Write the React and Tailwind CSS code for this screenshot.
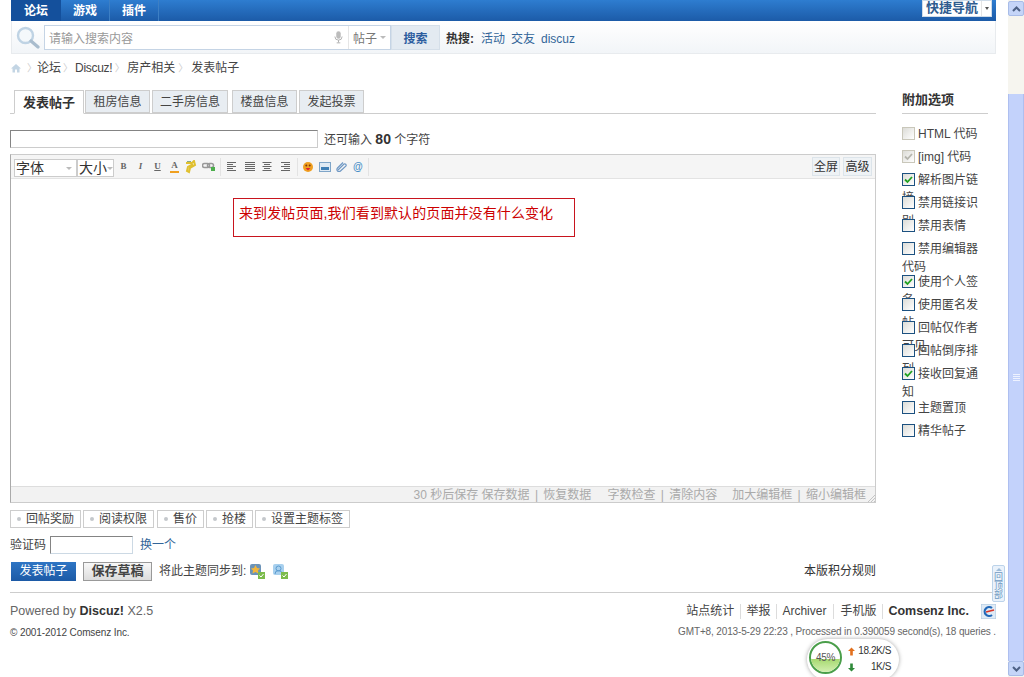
import React from "react";

const F = { fontFamily: '"Liberation Sans","Noto Sans CJK SC",sans-serif' };

function Check({ on, dis }) {
  return (
    <span className={`relative z-10 inline-block w-[13px] h-[13px] mr-[3px] align-[-2px] border bg-gradient-to-br from-[#dcdcd7] to-white ${dis ? "border-[#c9c7ba]" : "border-[#1c5180]"}`}>
      {on && (
        <svg viewBox="0 0 11 11" className="absolute inset-0 w-[11px] h-[11px]">
          <path d="M2 5.5 L4.5 8 L9 3" fill="none" stroke={dis ? "#b5b5ad" : "#21a121"} strokeWidth="1.8" />
        </svg>
      )}
    </span>
  );
}

function Opt({ label, on, dis, h = "h-[23px]" }) {
  return (
    <div className={`${h} w-[86px] leading-[18px] text-[12px] text-[#444]`}>
      <Check on={on} dis={dis} />
      {label}
    </div>
  );
}

function Tab({ children, active, w, ml }) {
  return active ? (
    <div className={`${w} ${ml} h-[24px] -mb-px bg-white border border-[#cdcdcd] border-b-white text-center font-bold text-[13px] text-[#333] leading-[23px]`}>{children}</div>
  ) : (
    <div className={`${w} ${ml} h-[23px] bg-[#e8edf2] border border-[#cdcdcd] text-center text-[#444] leading-[22px]`}>{children}</div>
  );
}

function Sep() {
  return <span className="w-px h-[15px] bg-[#dcdcdc] mx-[5.5px]" />;
}

function Tag({ children, w, ml }) {
  return (
    <div className={`${w} ${ml} h-[18px] border border-[#cdcdcd] flex items-center text-[12px] text-[#444] leading-none pl-[5px]`}>
      <span className="w-[4px] h-[4px] rounded-full bg-[#c4c8cc] mr-[5px] ml-[1px] shrink-0" />
      {children}
    </div>
  );
}

function Lines({ kind }) {
  const rows = [0, 1, 2, 3, 4];
  const base = [9, 6, 9, 6, 9];
  return (
    <svg viewBox="0 0 10 9" className="w-[10px] h-[9px] mr-[7.5px]">
      {rows.map((r) => {
        const w = kind === "j" ? 10 : base[r];
        const x = kind === "r" ? 10 - w : kind === "c" ? (10 - w) / 2 : 0;
        return <rect key={r} x={x} y={r * 2} width={w} height="1" fill="#666" />;
      })}
    </svg>
  );
}

function Pipe() {
  return <span className="mx-[2px]">|</span>;
}

export default function App() {
  return (
    <div style={F} className="relative w-[1024px] h-[677px] overflow-hidden bg-white flex text-[12px] text-[#444]">
      <div className="w-[1008px] shrink-0 flex flex-col">
        {/* nav */}
        <div className="ml-[11px] w-[985px] h-[21px] bg-gradient-to-b from-[#2e7dd0] to-[#1c5ba8] flex items-stretch text-white font-bold text-[12px]">
          <div className="w-[50px] bg-[#14509c] flex items-center justify-center">论坛</div>
          <div className="w-[49px] flex items-center justify-center border-r border-[#3d7fc4]">游戏</div>
          <div className="w-[49px] flex items-center justify-center border-r border-[#3d7fc4]">插件</div>
          <div className="flex-1" />
          <div className="mr-[4px] w-[70px] h-[17px] bg-white border border-[#cfdce9] text-[#2f5c8f] text-[13px] leading-none flex items-center pl-[3px]">
            <span className="pb-[2px]">快捷导航</span>
            <span className="ml-[3px] pl-[3px] border-l border-[#e4e4e4] h-full flex items-center">
              <span className="w-0 h-0 border-x-[2px] border-x-transparent border-t-[3px] border-t-[#555]" />
            </span>
          </div>
        </div>
        {/* search */}
        <div className="ml-[11px] w-[985px] h-[33px] bg-gradient-to-b from-white to-[#f2f5f8] border-b border-x border-[#e8ebee] flex items-center">
          <svg viewBox="0 0 24 24" className="w-[24px] h-[24px] ml-[4px] mr-[4px] mt-[1px]">
            <circle cx="9.5" cy="9.5" r="7.5" fill="#f4f8fb" stroke="#bfd3e4" strokeWidth="2.4" />
            <path d="M15 15 L22 21" stroke="#a9bccd" strokeWidth="3.2" strokeLinecap="round" />
          </svg>
          <div className="w-[347px] h-[25px] bg-white border border-[#c5d4e5] flex items-center pl-[4px] text-[#999]">
            <span className="flex-1 pt-[4px]">请输入搜索内容</span>
            <svg viewBox="0 0 10 14" className="w-[9px] h-[14px] mr-[5px]">
              <rect x="2.5" y="0.5" width="5" height="8.5" rx="2.5" fill="#bcbcbc" />
              <path d="M1 6.5 a4 4 0 0 0 8 0 M5 10.5 V13 M3 13.5 H7" fill="none" stroke="#aaa" strokeWidth="1" />
            </svg>
            <span className="h-full border-l border-[#e6e6e6] pl-[4px] pr-[4px] flex items-center text-[#777]">
              <span className="pt-[3px]">帖子</span>
              <span className="ml-[3px] w-0 h-0 border-x-[3px] border-x-transparent border-t-[3px] border-t-[#bbb]" />
            </span>
          </div>
          <div className="w-[49px] h-[25px] pt-[3px] bg-[#e3eaf1] border border-[#d5dfe9] flex items-center justify-center font-bold text-[#2b5c9e]">搜索</div>
          <div className="flex items-center pt-[3px]">
            <span className="ml-[6px] font-bold text-[#333]">热搜:</span>
            <span className="ml-[7px] text-[#369]">活动</span>
            <span className="ml-[6px] text-[#369]">交友</span>
            <span className="ml-[6px] text-[#369]">discuz</span>
          </div>
        </div>
        {/* breadcrumb */}
        <div className="ml-[11px] h-[18px] mt-[5px] flex items-center text-[#444]">
          <svg viewBox="0 0 10 10" className="w-[10px] h-[10px] mr-[6px]">
            <path d="M5 1 L10 5.5 H8.5 V9.5 H6 V6.5 H4 V9.5 H1.5 V5.5 H0 Z" fill="#c3d5e4" />
          </svg>
          <span className="text-[#ccc] w-[10px] text-[10px]">〉</span>
          <span>论坛</span>
          <span className="text-[#ccc] w-[14px] text-center text-[10px]">〉</span>
          <span className="tracking-[-0.3px]">Discuz!</span>
          <span className="text-[#ccc] w-[15px] text-center text-[10px]">〉</span>
          <span>房产相关</span>
          <span className="text-[#ccc] w-[16px] text-center text-[10px]">〉</span>
          <span>发表帖子</span>
        </div>

        {/* body */}
        <div className="flex mt-[13px]">
          <div className="ml-[10px] w-[866px] flex flex-col">
            <div className="h-[24px] border-b border-[#cdcdcd] flex pl-[4px] items-start">
              <Tab active w="w-[70px]">发表帖子</Tab>
              <Tab w="w-[65px]" ml="ml-px">租房信息</Tab>
              <Tab w="w-[76px]" ml="ml-[2px]">二手房信息</Tab>
              <Tab w="w-[65px]" ml="ml-[4px]">楼盘信息</Tab>
              <Tab w="w-[65px]" ml="ml-[2px]">发起投票</Tab>
            </div>
            {/* title */}
            <div className="mt-[16px] flex items-center h-[18px]">
              <div className="w-[308px] h-[18px] bg-white border border-[#ccc] border-t-[#848484] border-l-[#848484]" />
              <span className="ml-[6px] text-[#444]">还可输入 <b className="text-[14px] text-[#333]">80</b> 个字符</span>
            </div>
            {/* editor */}
            <div className="relative mt-[6px] h-[349px] border border-[#ccc] border-l-[#aaa] flex flex-col">
              <div className="h-[24px] bg-[#f5f5f5] border-b border-[#e3e3e3] flex items-center pl-[3px] pr-[3px]">
                <div className="w-[63px] h-[18px] mt-[3px] border border-[#ccc] bg-white flex items-center text-[14px] text-[#333] pl-[1px]">
                  <span className="flex-1">字体</span>
                  <span className="mr-[4px] w-0 h-0 border-x-[3px] border-x-transparent border-t-[3px] border-t-[#bbb]" />
                </div>
                <div className="w-[37px] h-[18px] mt-[3px] border border-[#ccc] bg-white flex items-center text-[14px] text-[#333] pl-[1px]">
                  <span className="flex-1 whitespace-nowrap">大小</span>
                  <span className="w-0 h-0 border-x-[3px] border-x-transparent border-t-[3px] border-t-[#bbb]" />
                </div>
                <div className="flex items-center ml-[1px] text-[9px] text-[#666]" style={{ fontFamily: '"Liberation Serif",serif' }}>
                  <b className="w-[17px] text-center">B</b>
                  <i className="w-[17px] text-center font-bold">I</i>
                  <u className="w-[17px] text-center font-bold">U</u>
                  <span className="w-[17px] flex flex-col items-center leading-none font-bold">
                    A<span className="w-[9px] h-[2px] mt-px bg-[#f0a020]" />
                  </span>
                  <svg viewBox="0 0 14 14" className="w-[14px] h-[14px] ml-[1px]">
                    <path d="M2 3 H8 L10 1 L11 5 L6 8 L5 12 L3 11 L4 7 L9 4" fill="none" stroke="#e0c030" strokeWidth="2" />
                    <path d="M3 1.5 H7" stroke="#8a8" strokeWidth="1" />
                  </svg>
                  <svg viewBox="0 0 14 10" className="w-[14px] h-[10px] ml-[4px]">
                    <rect x="0.5" y="1.5" width="7" height="4" rx="2" fill="none" stroke="#999" strokeWidth="1.5" />
                    <rect x="5.5" y="1.5" width="6" height="4" rx="2" fill="none" stroke="#999" strokeWidth="1.5" />
                    <rect x="9" y="5" width="4" height="4" fill="#4cae4c" />
                  </svg>
                </div>
                <span className="w-px h-[18px] bg-[#e3e3e3] ml-[4px] mr-[6px]" />
                <div className="flex items-center">
                  <Lines kind="l" />
                  <Lines kind="j" />
                  <Lines kind="c" />
                  <Lines kind="r" />
                </div>
                <span className="w-px h-[18px] bg-[#e3e3e3] mr-[5px]" />
                <svg viewBox="0 0 10 10" className="w-[10px] h-[10px] mr-[6px]">
                  <circle cx="5" cy="5" r="5" fill="#f0a020" />
                  <circle cx="3.3" cy="3.6" r="1" fill="#7a3a10" />
                  <circle cx="6.7" cy="3.6" r="1" fill="#7a3a10" />
                  <path d="M2.5 6 H7.5 L5 8.5 Z" fill="#d23" />
                </svg>
                <svg viewBox="0 0 12 10" className="w-[12px] h-[10px] mr-[5px]">
                  <rect x="0.5" y="0.5" width="11" height="9" fill="#dfeaf4" stroke="#7fa5c8" />
                  <rect x="2" y="5" width="8" height="3" fill="#3f7fb5" />
                </svg>
                <svg viewBox="0 0 11 11" className="w-[11px] h-[11px] mr-[6px]">
                  <path d="M2 9 L8 3 a1.5 1.5 0 0 1 2 2 L4.5 10 a1 1 0 0 1 -3 -3 L7 1.5" fill="none" stroke="#6f98c4" strokeWidth="1.2" />
                </svg>
                <span className="w-[10px] text-[10px] font-bold text-[#4a90c8] leading-none">@</span>
                <span className="w-px h-[18px] bg-[#e3e3e3] ml-[5px]" />
                <div className="flex-1" />
                <div className="w-[28px] h-[19px] bg-[#eef2f5] border border-[#dce4ea] text-[#333] text-center leading-[18px]">全屏</div>
                <div className="w-[29px] h-[19px] ml-[3px] bg-[#eef2f5] border border-[#dce4ea] text-[#333] text-center leading-[18px]">高级</div>
              </div>
              <div className="flex-1 bg-white" />
              <div className="relative h-[16px] bg-[#f2f2f2] border-t border-[#ddd] flex items-center justify-end pt-px pr-[9px] text-[#aaa] whitespace-pre">
                <span>30 秒后保存 保存数据 <Pipe /> 恢复数据</span>
                <span className="ml-[16px]">字数检查 <Pipe /> 清除内容</span>
                <span className="ml-[15px]">加大编辑框 <Pipe /> 缩小编辑框</span>
                <svg viewBox="0 0 8 8" className="absolute right-0 bottom-0 w-[8px] h-[8px]">
                  <path d="M8 1 L1 8 M8 4 L4 8 M8 7 L7 8" stroke="#c4c4c4" />
                </svg>
              </div>
              {/* annotation */}
              <div className="absolute left-[222px] top-[43px] w-[342px] h-[39px] border border-[#c8141e] text-[#c00] text-[14px] leading-none pl-[5px] pt-[7px] whitespace-nowrap tracking-[0.1px]">
                来到发帖页面,我们看到默认的页面并没有什么变化
              </div>
            </div>
            {/* tags */}
            <div className="flex mt-[7px]">
              <Tag w="w-[71px]">回帖奖励</Tag>
              <Tag w="w-[71px]" ml="ml-[2px]">阅读权限</Tag>
              <Tag w="w-[47px]" ml="ml-[3px]">售价</Tag>
              <Tag w="w-[47px]" ml="ml-[2px]">抢楼</Tag>
              <Tag w="w-[95px]" ml="ml-[2px]">设置主题标签</Tag>
            </div>
            {/* captcha */}
            <div className="flex items-center mt-[8px] h-[18px]">
              <span className="text-[#444]">验证码</span>
              <div className="ml-[4px] w-[83px] h-[18px] border border-[#ccd9e4] border-t-[#848484] border-l-[#848484]" />
              <span className="ml-[7px] text-[#369]">换一个</span>
            </div>
            {/* buttons */}
            <div className="flex items-center mt-[7px] h-[20px]">
              <div className="ml-px w-[65px] h-[19px] bg-gradient-to-b from-[#2e75c4] to-[#1c5aa6] text-white flex items-center justify-center">发表帖子</div>
              <div className="ml-[7px] w-[69px] h-[19px] bg-gradient-to-b from-[#f8f8f8] to-[#dcdcdc] border border-[#999] font-bold text-[13px] text-[#444] flex items-center justify-center">保存草稿</div>
              <span className="ml-[7px] text-[#444]">将此主题同步到:</span>
              <svg viewBox="0 0 15 16" className="w-[15px] h-[16px] ml-[4px]">
                <rect x="0" y="1" width="11" height="11" rx="2" fill="#6b93b8" />
                <path d="M5.5 2 L7 5 L10 5.5 L8 7.5 L8.5 10.5 L5.5 9 L2.5 10.5 L3 7.5 L1 5.5 L4 5 Z" fill="#f2b63c" />
                <rect x="8" y="9" width="7" height="7" fill="#7cbc4c" />
                <path d="M9.5 12.5 L11 14 L13.5 11" stroke="#fff" fill="none" />
              </svg>
              <svg viewBox="0 0 15 16" className="w-[15px] h-[16px] ml-[8px]">
                <rect x="0" y="1" width="11" height="11" rx="2" fill="#a8d0ee" />
                <circle cx="5.5" cy="5.5" r="2.5" fill="none" stroke="#5a9bd0" />
                <path d="M2 11 a3.5 3.5 0 0 1 7 0" fill="none" stroke="#5a9bd0" />
                <rect x="8" y="9" width="7" height="7" fill="#7cbc4c" />
                <path d="M9.5 12.5 L11 14 L13.5 11" stroke="#fff" fill="none" />
              </svg>
              <span className="ml-auto text-[#333]">本版积分规则</span>
            </div>
          </div>
          {/* sidebar */}
          <div className="ml-[26px] w-[86px]">
            <div className="h-[24px] border-b border-[#cdcdcd] font-bold text-[13px] text-[#333] leading-[20px]">附加选项</div>
            <div className="mt-[11px] pl-0">
              <Opt label="HTML 代码" dis />
              <Opt label="[img] 代码" on dis />
              <Opt label="解析图片链接" on />
              <Opt label="禁用链接识别" />
              <Opt label="禁用表情" />
              <Opt label="禁用编辑器代码" h="h-[33px]" />
              <Opt label="使用个人签名" on />
              <Opt label="使用匿名发帖" />
              <Opt label="回帖仅作者可见" />
              <Opt label="回帖倒序排列" />
              <Opt label="接收回复通知" on h="h-[34px]" />
              <Opt label="主题置顶" />
              <Opt label="精华帖子" />
            </div>
          </div>
        </div>

        {/* footer */}
        <div className="ml-[10px] w-[986px] mt-[11px] border-t border-[#cdcdcd] flex justify-between pt-[9px]">
          <div>
            <div className="text-[12.5px] leading-[18px] text-[#666]">
              Powered by <b className="text-[#333]">Discuz!</b> X2.5
            </div>
            <div className="mt-[6px] text-[10px] leading-[14px] text-[#444] tracking-[-0.1px]">© 2001-2012 Comsenz Inc.</div>
          </div>
          <div className="flex flex-col items-end">
            <div className="flex items-center h-[18px] text-[#444]">
              <span>站点统计</span>
              <Sep />
              <span>举报</span>
              <Sep />
              <span>Archiver</span>
              <span className="w-px h-[15px] bg-[#dcdcdc] ml-[7px] mr-[6px]" />
              <span>手机版</span>
              <Sep />
              <b className="text-[#333] text-[12.5px]">Comsenz Inc.</b>
              <svg viewBox="0 0 15 15" className="w-[15px] h-[15px] ml-[12px]">
                <rect width="15" height="15" rx="1" fill="#dfeaf5" stroke="#a8c4de" />
                <path d="M11 4 a4.5 4.5 0 1 0 0 7" fill="none" stroke="#2268b8" strokeWidth="2.2" />
                <path d="M5 8 L13 6" stroke="#d8342a" strokeWidth="1.6" />
              </svg>
            </div>
            <div className="mt-[5px] text-[10px] leading-[14px] text-[#666] whitespace-pre tracking-[-0.14px]">GMT+8, 2013-5-29 22:23 , Processed in 0.390059 second(s), 18 queries .</div>
          </div>
        </div>
      </div>

      {/* scrollbar */}
      <div className="w-[16px] shrink-0 h-full bg-[#f6f5ef] flex flex-col">
        <div className="mt-px h-[15px] bg-[#c5d5f8] border border-[#a8bce8] rounded-[2px] flex items-center justify-center">
          <svg viewBox="0 0 9 6" className="w-[9px] h-[6px]"><path d="M1 5 L4.5 1.5 L8 5" fill="none" stroke="#4d6185" strokeWidth="2" /></svg>
        </div>
        <div className="h-[78px]" />
        <div className="flex-1 bg-[#c3d2fb] border-x border-[#aebff0] flex items-center justify-center">
          <div className="w-[7px] flex flex-col gap-px">
            <span className="h-px bg-[#eef2ff]" />
            <span className="h-px bg-[#eef2ff]" />
            <span className="h-px bg-[#eef2ff]" />
            <span className="h-px bg-[#eef2ff]" />
          </div>
        </div>
        <div className="h-[15px] mb-px bg-[#c5d5f8] border border-[#a8bce8] rounded-[2px] flex items-center justify-center">
          <svg viewBox="0 0 9 6" className="w-[9px] h-[6px]"><path d="M1 1 L4.5 4.5 L8 1" fill="none" stroke="#4d6185" strokeWidth="2" /></svg>
        </div>
      </div>

      {/* back to top */}
      <div className="absolute left-[992px] top-[565px] w-[13px] h-[37px] bg-[#eaf2fb] border border-[#bcd3ea] rounded-[2px] flex flex-col items-center text-[9px] leading-[9px] text-[#6f9ac2]">
        <span className="mt-[2px] mb-[2px] w-0 h-0 border-x-[3px] border-x-transparent border-b-[3px] border-b-[#9dbbd8]" />
        <span>回</span>
        <span>顶</span>
        <span>部</span>
      </div>

      {/* speed widget */}
      <div className="absolute left-[807px] top-[639px] w-[92px] h-[41px] bg-white rounded-full shadow-[0_0_4px_rgba(0,0,0,0.35)] flex items-start">
        <div className="relative ml-[2px] mt-[2px] w-[33px] h-[33px] rounded-full border-[2px] border-[#4a9e4a] overflow-hidden bg-white flex items-center justify-center text-[10px] text-[#555]">
          <div className="absolute left-0 right-0 bottom-0 h-[45%] bg-gradient-to-b from-[#a6d96f] to-[#d3efb0]" />
          <span className="relative tracking-[-0.3px]">45%</span>
        </div>
        <div className="ml-[6px] mt-[4px] w-[43px] flex flex-col text-[10px] text-[#333] leading-[16px] tracking-[-0.4px]">
          <div className="flex items-center justify-between">
            <svg viewBox="0 0 8 9" className="w-[7px] h-[9px]"><path d="M4 0 L8 4 H5.5 V9 H2.5 V4 H0 Z" fill="#e2701e" /></svg>
            <span>18.2K/S</span>
          </div>
          <div className="flex items-center justify-between">
            <svg viewBox="0 0 8 9" className="w-[7px] h-[9px]"><path d="M4 9 L8 5 H5.5 V0 H2.5 V5 H0 Z" fill="#2f8a3a" /></svg>
            <span>1K/S</span>
          </div>
        </div>
      </div>
    </div>
  );
}
